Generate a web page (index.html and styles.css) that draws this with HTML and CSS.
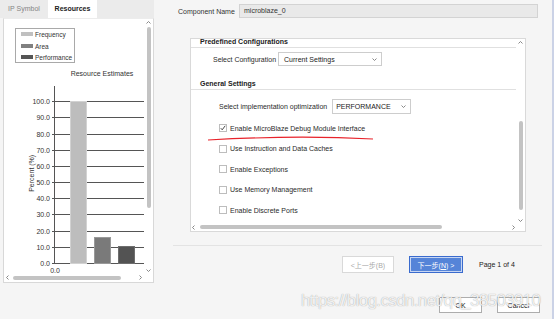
FILE: index.html
```html
<!DOCTYPE html>
<html lang="en">
<head>
    <meta charset="UTF-8">
    <title>Customize IP - MicroBlaze</title>
    <link rel="stylesheet" href="styles.css">
</head>
<body>
<div class="window">

    <!-- left pane: resource estimates -->
    <aside class="side">
        <div class="tabs">
            <span class="tab">IP Symbol</span>
            <span class="tab tab-active">Resources</span>
        </div>
        <div class="panel">
            <div class="chart-area">
                <svg class="chart" width="140" height="254" viewBox="0 0 140 254">
                    <rect x="11.5" y="9.5" width="59" height="34" fill="#fff" stroke="#a9a9a9"/>
                    <rect x="17" y="13" width="12" height="4" fill="#c0c0c0"/>
                    <rect x="17" y="25" width="12" height="4" fill="#808080"/>
                    <rect x="17" y="36" width="12" height="4" fill="#555"/>
                    <g class="legend">
                        <text x="31" y="18">Frequency</text>
                        <text x="31" y="29.5">Area</text>
                        <text x="31" y="41">Performance</text>
                    </g>

                    <text x="98" y="57" text-anchor="middle">Resource Estimates</text>
                    <text x="30.2" y="154.3" text-anchor="middle" transform="rotate(-90 30.2 154.3)">Percent (%)</text>

                    <g class="grid">
                        <line x1="47.5" y1="82.5" x2="139.5" y2="82.5"/>
                        <line x1="47.5" y1="98.5" x2="139.5" y2="98.5"/>
                        <line x1="47.5" y1="115.5" x2="139.5" y2="115.5"/>
                        <line x1="47.5" y1="131.5" x2="139.5" y2="131.5"/>
                        <line x1="47.5" y1="147.5" x2="139.5" y2="147.5"/>
                        <line x1="47.5" y1="163.5" x2="139.5" y2="163.5"/>
                        <line x1="47.5" y1="179.5" x2="139.5" y2="179.5"/>
                        <line x1="47.5" y1="195.5" x2="139.5" y2="195.5"/>
                        <line x1="47.5" y1="212.5" x2="139.5" y2="212.5"/>
                        <line x1="47.5" y1="228.5" x2="139.5" y2="228.5"/>
                        <line x1="47.5" y1="244.5" x2="139.5" y2="244.5"/>
                        <line x1="50.5" y1="67" x2="50.5" y2="245"/>
                    </g>
                    <g class="ticks" text-anchor="end">
                        <text x="46" y="85">100.0</text>
                        <text x="46" y="101">90.0</text>
                        <text x="46" y="118">80.0</text>
                        <text x="46" y="134">70.0</text>
                        <text x="46" y="150">60.0</text>
                        <text x="46" y="166">50.0</text>
                        <text x="46" y="182">40.0</text>
                        <text x="46" y="198">30.0</text>
                        <text x="46" y="215">20.0</text>
                        <text x="46" y="231">10.0</text>
                        <text x="46" y="247">0.0</text>
                    </g>
                    <rect x="66.5" y="82.5" width="15.5" height="162" fill="#bdbdbd" stroke="#d2d2d2"/>
                    <rect x="90.5" y="218.5" width="16" height="26" fill="#7a7a7a" stroke="#999"/>
                    <rect x="114.5" y="227" width="16" height="17.5" fill="#535353" stroke="#6e6e6e"/>
                    <text x="51" y="254" text-anchor="middle">0.0</text>
                </svg>
            </div>
            <div class="vscroll vscroll-side">
                <svg class="arrow" width="5" height="3" viewBox="0 0 5 3"><polyline points="0.5,2.5 2.5,0.5 4.5,2.5"/></svg>
                <div class="thumb-v"></div>
                <div class="spacer"></div>
                <svg class="arrow" width="5" height="3" viewBox="0 0 5 3"><polyline points="0.5,0.5 2.5,2.5 4.5,0.5"/></svg>
            </div>
            <div class="hscroll hscroll-side">
                <svg class="arrow" width="3" height="5" viewBox="0 0 3 5"><polyline points="2.5,0.5 0.5,2.5 2.5,4.5"/></svg>
                <div class="thumb-h"></div>
                <div class="spacer"></div>
                <svg class="arrow" width="3" height="5" viewBox="0 0 3 5"><polyline points="0.5,0.5 2.5,2.5 0.5,4.5"/></svg>
            </div>
            <div class="corner"></div>
        </div>
    </aside>

    <!-- right pane: configuration page -->
    <main class="main">
        <div class="name-row">
            <span class="name-label">Component Name</span>
            <div class="name-input">microblaze_0</div>
        </div>

        <div class="config-box">
            <div class="config-view">
                <div class="config-content">
                    <div class="group-title">Predefined Configurations</div>
                    <div class="field-row row-config">
                        <span>Select Configuration</span>
                        <div class="select select-config">
                            <span>Current Settings</span>
                            <svg width="5" height="3" viewBox="0 0 5 3"><polyline points="0.5,0.5 2.5,2.5 4.5,0.5"/></svg>
                        </div>
                    </div>

                    <div class="group-title title-general">General Settings</div>
                    <div class="field-row row-opt">
                        <span>Select implementation optimization</span>
                        <div class="select select-opt">
                            <span>PERFORMANCE</span>
                            <svg width="5" height="3" viewBox="0 0 5 3"><polyline points="0.5,0.5 2.5,2.5 4.5,0.5"/></svg>
                        </div>
                    </div>

                    <div class="check-list">
                        <div class="check-row">
                            <span class="checkbox"><svg width="6" height="6" viewBox="0 0 6 6"><polyline points="0.8,3.2 2.2,4.8 5.2,0.8"/></svg></span>
                            Enable MicroBlaze Debug Module Interface
                        </div>
                        <div class="check-row"><span class="checkbox"></span>Use Instruction and Data Caches</div>
                        <div class="check-row"><span class="checkbox"></span>Enable Exceptions</div>
                        <div class="check-row"><span class="checkbox"></span>Use Memory Management</div>
                        <div class="check-row"><span class="checkbox"></span>Enable Discrete Ports</div>
                    </div>
                </div>
            </div>
            <div class="vscroll vscroll-box">
                <svg class="arrow" width="5" height="3" viewBox="0 0 5 3"><polyline points="0.5,2.5 2.5,0.5 4.5,2.5"/></svg>
                <div class="thumb-v"></div>
                <div class="spacer"></div>
                <svg class="arrow" width="5" height="3" viewBox="0 0 5 3"><polyline points="0.5,0.5 2.5,2.5 4.5,0.5"/></svg>
            </div>
            <div class="hscroll hscroll-box">
                <svg class="arrow" width="3" height="5" viewBox="0 0 3 5"><polyline points="2.5,0.5 0.5,2.5 2.5,4.5"/></svg>
                <div class="thumb-h"></div>
                <div class="spacer"></div>
                <svg class="arrow" width="3" height="5" viewBox="0 0 3 5"><polyline points="0.5,0.5 2.5,2.5 0.5,4.5"/></svg>
            </div>
            <div class="corner"></div>
        </div>

        <div class="separator"></div>

        <div class="nav-row">
            <button class="btn btn-prev" disabled>&lt;上一步(B)</button>
            <button class="btn btn-next">下一步(<u>N</u>) &gt;</button>
            <span class="page-info">Page 1 of 4</span>
        </div>

        <div class="dialog-row">
            <button class="btn btn-dialog">OK</button>
            <button class="btn btn-dialog">Cancel</button>
        </div>
    </main>

    <!-- hand-drawn red underline -->
    <svg class="annotation" width="170" height="10" viewBox="0 0 170 10">
        <path d="M2 6 Q90 1 167 5"/>
    </svg>

    <div class="watermark">https://blog.csdn.net/qq_38503910</div>
</div>
</body>
</html>
```

FILE: styles.css
```css
* {
    box-sizing: border-box;
}

body {
    margin: 0;
    font-family: "Liberation Sans", Arial, "Noto Sans CJK SC", sans-serif;
    font-size: 7px;
    color: #2b2b2b;
    background-color: #f5f5f5;
}

.window {
    position: relative;
    display: flex;
    width: 554px;
    height: 319px;
    overflow: hidden;
    background-color: #f5f5f5;
}

/* ---------- left pane ---------- */

.side {
    width: 154px;
    flex-shrink: 0;
}

.tabs {
    display: flex;
    height: 18px;
    background-color: #ebebeb;
}

.tab {
    width: 48px;
    line-height: 18px;
    text-align: center;
    color: #858585;
}

.tab-active {
    width: 49px;
    background-color: #ffffff;
    color: #222;
    font-weight: bold;
}

.panel {
    display: grid;
    grid-template-columns: 140px 9px;
    grid-template-rows: 254px 9px;
    width: 151px;
    height: 265px;
    margin-left: 3px;
    background-color: #ffffff;
    border: 1px solid #d8d8d8;
    border-top-color: #ececec;
}

.chart {
    display: block;
    overflow: visible;
    font-family: "Liberation Sans", Arial, sans-serif;
    font-size: 7px;
    fill: #333;
}

.chart .legend {
    font-size: 6.5px;
}

.chart .grid line {
    stroke: #555;
    stroke-width: 1;
    shape-rendering: crispEdges;
}

.chart rect {
    shape-rendering: crispEdges;
}

/* scrollbars */

.vscroll {
    display: flex;
    flex-direction: column;
    align-items: center;
    background-color: #ffffff;
}

.hscroll {
    display: flex;
    align-items: center;
    background-color: #ffffff;
}

.spacer {
    flex: 1;
}

.arrow {
    display: block;
    flex-shrink: 0;
}

.arrow polyline,
.select polyline {
    fill: none;
    stroke: #7a7a7a;
    stroke-width: 0.9;
}

.thumb-v {
    width: 4px;
    border-radius: 2px;
    background-color: #c3c3c3;
}

.thumb-h {
    height: 4px;
    border-radius: 2px;
    background-color: #c3c3c3;
}

.vscroll-side {
    padding: 2px 0 1px;
}

.vscroll-side .thumb-v {
    margin-top: 3px;
    height: 181px;
}

.hscroll-side {
    padding: 0 2px;
}

.hscroll-side .thumb-h {
    margin-left: 4px;
    width: 108px;
}

.corner {
    background-color: #ffffff;
}

/* ---------- right pane ---------- */

.main {
    flex: 1;
    border-right: 2px solid #cbd2e6;
}

.name-row {
    display: flex;
    align-items: center;
    height: 14px;
    margin-top: 4px;
    padding-left: 24px;
}

.name-label {
    width: 61px;
    flex-shrink: 0;
    color: #333;
}

.name-input {
    width: 299px;
    height: 14px;
    padding-left: 4px;
    line-height: 12px;
    color: #333;
    background-color: #e9e9e9;
    border: 1px solid #d3d3d3;
}

.config-box {
    display: grid;
    grid-template-columns: 325px 9px;
    grid-template-rows: 184px 8px;
    width: 336px;
    height: 194px;
    margin: 20px 0 0 36px;
    background-color: #ffffff;
    border: 1px solid #d9d9d9;
}

.config-view {
    overflow: hidden;
}

.config-content {
    margin-top: -2px;
}

.group-title {
    padding: 0 0 1px 9px;
    line-height: 9px;
    font-weight: bold;
    color: #222;
    border-bottom: 1px solid #e0e0e0;
}

.title-general {
    margin-top: 13px;
}

.field-row {
    display: flex;
    align-items: center;
}

.row-config {
    margin-top: 4px;
    padding-left: 22px;
    gap: 2px;
}

.row-opt {
    margin-top: 9px;
    padding-left: 28px;
    gap: 5px;
}

.select {
    display: flex;
    align-items: center;
    justify-content: space-between;
    background-color: #ffffff;
    border: 1px solid #cdcdcd;
    color: #222;
}

.select-config {
    width: 104px;
    height: 14px;
    padding: 0 4px 0 5px;
}

.select-opt {
    width: 79px;
    height: 15px;
    padding: 0 4px 0 3px;
}

.check-list {
    margin-top: 4px;
    padding-left: 28px;
}

.check-row {
    display: flex;
    align-items: center;
    height: 20.5px;
    color: #2b2b2b;
}

.checkbox {
    display: flex;
    align-items: center;
    justify-content: center;
    width: 8px;
    height: 8px;
    margin-right: 3px;
    border: 1px solid #bdbdbd;
    background-color: #ffffff;
}

.checkbox polyline {
    fill: none;
    stroke: #333;
    stroke-width: 0.9;
}

.vscroll-box {
    padding: 2px 0 1.5px;
}

.vscroll-box .thumb-v {
    margin-top: 77px;
    height: 89px;
}

.hscroll-box {
    padding: 0 1px;
}

.hscroll-box .thumb-h {
    margin-left: 5px;
    width: 242px;
}

.separator {
    width: 369px;
    height: 1px;
    margin: 13px 0 0 19px;
    background-color: #e3e3e3;
}

.nav-row {
    display: flex;
    align-items: center;
    margin: 10px 0 0 188px;
}

.btn {
    padding: 0;
    font-family: "Liberation Sans", Arial, "Noto Sans CJK SC", sans-serif;
    font-size: 7px;
    background-color: #ffffff;
    border: 1px solid #adadad;
    color: #222;
}

.btn-prev {
    width: 52px;
    height: 17px;
    color: #a9a9a9;
    border-color: #d9d9d9;
}

.btn-next {
    width: 54px;
    height: 17px;
    margin-left: 15px;
    color: #ffffff;
    background-color: #5584d8;
    border-color: #3a6bce;
    box-shadow: inset 0 0 0 1px #c7d6f3;
}

.btn-next u {
    text-decoration-thickness: 0.5px;
}

.page-info {
    margin-left: 16px;
    color: #222;
}

.dialog-row {
    display: flex;
    gap: 15px;
    margin: 24px 0 0 285px;
}

.btn-dialog {
    width: 43px;
    height: 16px;
}

/* ---------- overlays ---------- */

.annotation {
    position: absolute;
    left: 206px;
    top: 134px;
}

.annotation path {
    fill: none;
    stroke: #e8232b;
    stroke-width: 1.2;
}

.watermark {
    position: absolute;
    left: 301px;
    top: 291px;
    font-size: 17px;
    letter-spacing: -0.65px;
    color: rgba(255, 255, 255, 0.85);
    text-shadow: 0 0 1px rgba(0, 0, 0, 0.4);
    white-space: nowrap;
}
```
